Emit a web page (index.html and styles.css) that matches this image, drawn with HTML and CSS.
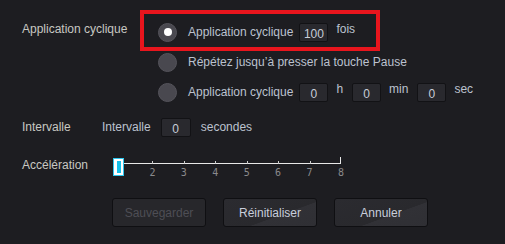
FILE: index.html
```html
<!DOCTYPE html>
<html lang="fr">
<head>
<meta charset="utf-8">
<link rel="stylesheet" href="styles.css">
</head>
<body>
<div class="panel">
  <div class="row cyclic">
    <div class="lbl lbl-top">Application cyclique</div>
    <div class="options">
      <div class="opt highlighted">
        <span class="radio checked"></span>
        <span class="otext">Application cyclique</span>
        <span class="field">100</span>
        <span class="unit">fois</span>
      </div>
      <div class="opt">
        <span class="radio"></span>
        <span class="otext">Répétez jusqu’à presser la touche Pause</span>
      </div>
      <div class="opt">
        <span class="radio"></span>
        <span class="otext">Application cyclique</span>
        <span class="field">0</span>
        <span class="unit">h</span>
        <span class="field">0</span>
        <span class="unit">min</span>
        <span class="field">0</span>
        <span class="unit">sec</span>
      </div>
    </div>
  </div>

  <div class="row interval">
    <div class="lbl lbl-int">Intervalle</div>
    <span class="otext">Intervalle</span>
    <span class="field wide">0</span>
    <span class="otext sec">secondes</span>
  </div>

  <div class="row accel">
    <div class="lbl lbl-acc">Accélération</div>
    <div class="slider">
      <div class="track">
        <span class="tick"><i></i><b></b></span>
        <span class="tick"><i></i><b>2</b></span>
        <span class="tick"><i></i><b>3</b></span>
        <span class="tick"><i></i><b>4</b></span>
        <span class="tick"><i></i><b>5</b></span>
        <span class="tick"><i></i><b>6</b></span>
        <span class="tick"><i></i><b>7</b></span>
        <span class="tick end"><i></i><b>8</b></span>
      </div>
      <span class="handle"></span>
    </div>
  </div>

  <div class="buttons">
    <button class="btn disabled">Sauvegarder</button>
    <button class="btn">Réinitialiser</button>
    <button class="btn">Annuler</button>
  </div>
</div>
</body>
</html>
```

FILE: styles.css
```css
*, *::before, *::after { box-sizing: border-box; }
html, body {
  margin: 0;
  padding: 0;
  background: #1d1d21;
  width: 505px;
  height: 244px;
  overflow: hidden;
}
body {
  font-family: "Liberation Sans", Arial, sans-serif;
  font-size: 12px;
  color: #c6c6c4;
}
.panel {
  padding: 17px 0 0 22px;
}
.row {
  display: flex;
}
.lbl {
  color: #c8c8c2;
  flex: none;
}
.lbl-top {
  width: 136px;
  line-height: 24px;
}
.options {
  display: flex;
  flex-direction: column;
}
.opt {
  position: relative;
  display: flex;
  align-items: center;
  height: 30px;
}
.highlighted::after {
  content: "";
  position: absolute;
  left: -18px;
  top: -7px;
  width: 240px;
  height: 41px;
  border: 4px solid #e8151d;
}
.radio {
  width: 19px;
  height: 19px;
  border-radius: 50%;
  background: #49484f;
  border: 1px solid #55545b;
  margin-right: 11px;
  display: flex;
  align-items: center;
  justify-content: center;
  flex: none;
}
.radio.checked::before {
  content: "";
  width: 8px;
  height: 8px;
  border-radius: 50%;
  background: #ffffff;
}
.otext {
  color: #bcc2cf;
  line-height: 14px;
}
.field {
  width: 29px;
  height: 19px;
  margin-left: 6px;
  background: #29292e;
  border: 1px solid #121215;
  border-radius: 2px;
  color: #c8cdd8;
  text-align: center;
  line-height: 19px;
  padding-top: 1px;
  flex: none;
}
.unit {
  color: #bcc2cf;
  margin: 0 3px 6px 8px;
  line-height: 14px;
}
.interval {
  margin-top: 11px;
  height: 19px;
  align-items: center;
}
.lbl-int {
  width: 80px;
  line-height: 14px;
  margin-top: -2px;
}
.interval .otext {
  margin-top: -2px;
}
.field.wide {
  width: 30px;
  margin: 0 10px;
}
.accel {
  margin-top: 21px;
  height: 18px;
}
.lbl-acc {
  width: 91px;
  line-height: 14px;
}
.slider {
  position: relative;
  width: 232px;
  height: 18px;
}
.track {
  position: absolute;
  left: 8px;
  top: 5px;
  width: 220px;
  border-top: 1px solid #e8e8e8;
  display: flex;
  justify-content: space-between;
}
.tick {
  position: relative;
  width: 0;
}
.tick i {
  position: absolute;
  left: 0;
  top: -3px;
  width: 1px;
  height: 3px;
  background: #cfcfcf;
}
.tick.end i {
  top: -7px;
  height: 7px;
  left: -1px;
  background: #e8e8e8;
}
.tick b {
  position: absolute;
  left: -4px;
  top: 3px;
  width: 8px;
  text-align: center;
  font-weight: normal;
  font-family: "DejaVu Sans Mono", "Liberation Mono", monospace;
  font-size: 10px;
  line-height: 11px;
  color: #8a8a8c;
}
.handle {
  position: absolute;
  left: 0;
  top: 0;
  width: 11px;
  height: 18px;
  border: 1px solid #2cc6ee;
  background: #ffffff;
  display: flex;
  align-items: center;
  justify-content: center;
}
.handle::after {
  content: "";
  width: 4px;
  height: 12px;
  background: #14c0ea;
}
.buttons {
  display: flex;
  gap: 17px;
  margin-top: 22px;
  padding-left: 90px;
}
.btn {
  width: 94px;
  height: 29px;
  border: 1px solid #0f0f12;
  border-radius: 3px;
  background: linear-gradient(160deg, #2b2b30 0%, #29292d 60%, #313136 61%, #2f2f34 100%);
  color: #c8cedc;
  font-family: "Liberation Sans", Arial, sans-serif;
  font-size: 12px;
  padding: 0;
}
.btn.disabled {
  color: #4e4e55;
  background: #27272b;
}
```
